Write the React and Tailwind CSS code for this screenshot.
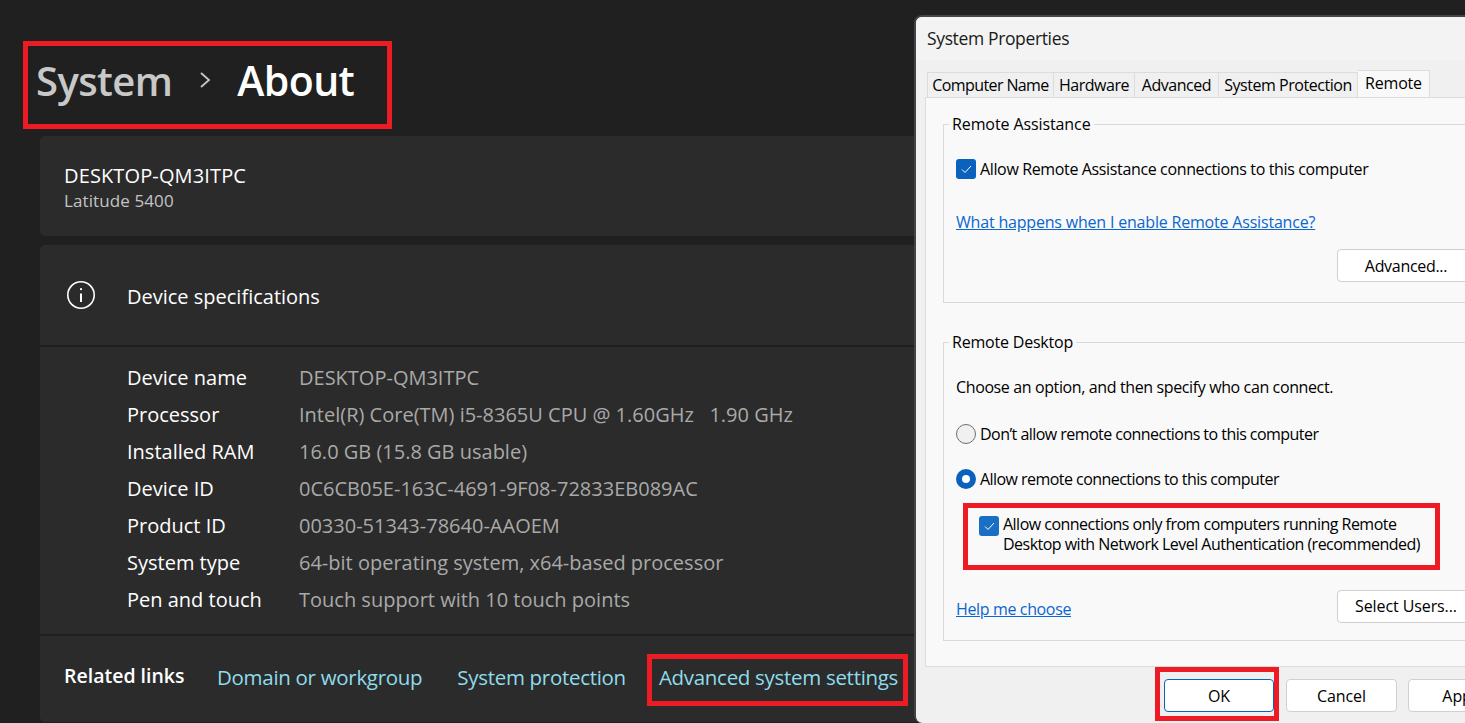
const font = { fontFamily: '"Open Sans", "Noto Sans", sans-serif' };

const specs = [
  ["Device name", "DESKTOP-QM3ITPC"],
  ["Processor", "Intel(R) Core(TM) i5-8365U CPU @ 1.60GHz   1.90 GHz"],
  ["Installed RAM", "16.0 GB (15.8 GB usable)"],
  ["Device ID", "0C6CB05E-163C-4691-9F08-72833EB089AC"],
  ["Product ID", "00330-51343-78640-AAOEM"],
  ["System type", "64-bit operating system, x64-based processor"],
  ["Pen and touch", "Touch support with 10 touch points"],
];

function Check({ color }) {
  return (
    <span className="flex h-5 w-5 shrink-0 items-center justify-center rounded-[3px]" style={{ backgroundColor: color }}>
      <svg width="11" height="9" viewBox="0 0 11 9" fill="none" stroke="#fff" strokeWidth="1">
        <path d="M1 4.5 L4 7.5 L10 1" />
      </svg>
    </span>
  );
}

function Btn({ children, className = "" }) {
  return (
    <div className={`flex h-[33px] shrink-0 items-center justify-center rounded-[4px] border bg-white text-[16px] text-black ${className}`}>
      {children}
    </div>
  );
}

function Redbox({ className }) {
  return <div className={`absolute border-[5px] border-[#ed1c24] ${className}`} />;
}

export default function App() {
  return (
    <div className="relative h-[723px] w-[1465px] overflow-hidden bg-[#202020] text-white" style={font}>
      <div className="flex w-[960px] flex-col pl-[40px]">
        <div className="flex h-[136px] items-center pt-[25px]">
          <span className="ml-[-4px] text-[40px] font-semibold tracking-[-0.6px] text-[#c8c8c8]">System</span>
          <svg className="ml-[27px] mt-[-2px]" width="12" height="18" viewBox="0 0 12 18" fill="none" stroke="#c8c8c8" strokeWidth="1.8">
            <path d="M2 2 L10 9 L2 16" />
          </svg>
          <span className="ml-[26px] text-[41px] font-semibold tracking-[-0.6px] text-white">About</span>
        </div>

        <div className="flex h-[100px] flex-col justify-center rounded-[5px] bg-[#2b2b2b] pl-[24px] pt-[4px]">
          <div className="text-[20px] leading-[26px] tracking-[0.13px] text-white">DESKTOP-QM3ITPC</div>
          <div className="text-[17px] leading-[24px] tracking-[0.1px] text-[#c4c4c4]">Latitude 5400</div>
        </div>

        <div className="mt-[9px] flex h-[477px] flex-col rounded-[5px] bg-[#2b2b2b]">
          <div className="flex h-[102px] items-center border-b-2 border-[#1f1f1f] pl-[26px]">
            <svg width="30" height="30" viewBox="0 0 30 30" fill="none" stroke="#fff" strokeWidth="1.6">
              <circle cx="15" cy="15" r="13.2" />
              <path d="M15 13.5 V22" strokeWidth="2" />
              <circle cx="15" cy="9.2" r="1.1" fill="#fff" stroke="none" />
            </svg>
            <span className="ml-[31px] pt-[4px] text-[20px] text-white">Device specifications</span>
          </div>
          <div className="flex h-[287px] flex-col pl-[87px] pt-[12px]">
            {specs.map(([k, v]) => (
              <div key={k} className="flex h-[37px] items-center text-[20px]">
                <span className="w-[172px] shrink-0 text-white">{k}</span>
                <span className="whitespace-pre text-[#a9a9a9]">{v}</span>
              </div>
            ))}
          </div>
          <div className="flex flex-1 items-center border-t-2 border-[#1f1f1f] pb-[4px] pl-[24px]">
            <span className="w-[153px] pb-[2px] text-[19.5px] font-semibold text-white">Related links</span>
            <span className="text-[20.5px] tracking-[-0.3px] text-[#8fdcec]">Domain or workgroup</span>
            <span className="ml-[35px] text-[20.5px] tracking-[-0.3px] text-[#8fdcec]">System protection</span>
            <span className="ml-[33px] text-[20.5px] tracking-[-0.3px] text-[#8fdcec]">Advanced system settings</span>
          </div>
        </div>
      </div>

      {/* Dialog window */}
      <div className="absolute left-[914px] top-[15px] flex h-[708px] w-[560px] flex-col overflow-hidden rounded-l-[8px] border-l-2 border-t-2 border-[#444] bg-[#f0f0f0] text-black">
        <div className="flex h-[43px] shrink-0 items-center bg-[#f3f3f3] pl-[11px] text-[17.5px] tracking-[-0.36px] text-[#1a1a1a]">System Properties</div>
        <div className="flex h-[37px] shrink-0 items-end whitespace-nowrap bg-[#f0f0f0] pl-[11px] text-[16px] tracking-[-0.45px]">
          <div className="flex h-[25px] w-[127px] items-center justify-center border border-b-0 border-[#dcdcdc] tracking-[-0.6px]">Computer Name</div>
          <div className="flex h-[25px] w-[81px] items-center justify-center border border-b-0 border-l-0 border-[#dcdcdc]">Hardware</div>
          <div className="flex h-[25px] w-[84px] items-center justify-center border border-b-0 border-l-0 border-[#dcdcdc]">Advanced</div>
          <div className="flex h-[25px] w-[139px] items-center justify-center border border-b-0 border-l-0 border-[#dcdcdc]">System Protection</div>
          <div className="flex h-[27px] w-[72px] items-start justify-center border border-b-0 border-l-0 border-[#dcdcdc] bg-[#f9f9f9] tracking-[-0.2px]">Remote</div>
        </div>
        <div className="ml-[9px] flex h-[570px] shrink-0 flex-col border border-[#dcdcdc] bg-[#f9f9f9] pl-[17px] pt-[14px] text-[16px] tracking-[-0.5px]">
          <fieldset className="h-[191px] w-[560px] shrink-0 border border-[#d9d9d9] pl-[12px]">
            <legend className="ml-[-7px] bg-[#f9f9f9] px-[3px] leading-[24px] tracking-[-0.1px]">Remote Assistance</legend>
            <div className="mt-[21px] flex items-center gap-[4px] tracking-[-0.36px]">
              <Check color="#0a62bd" />
              <span>Allow Remote Assistance connections to this computer</span>
            </div>
            <div className="mt-[31px] leading-[20px] tracking-[-0.19px] text-[#0a66d0] underline">What happens when I enable Remote Assistance?</div>
            <Btn className="ml-[381px] mt-[17px] w-[138px] border-[#d0d0d0] tracking-[-0.3px]">Advanced...</Btn>
          </fieldset>
          <fieldset className="mt-[27px] h-[311px] w-[560px] shrink-0 border border-[#d9d9d9] pl-[12px]">
            <legend className="ml-[-7px] bg-[#f9f9f9] px-[3px] leading-[24px] tracking-[-0.2px]">Remote Desktop</legend>
            <div className="mt-[23px] leading-[20px] tracking-[-0.38px]">Choose an option, and then specify who can connect.</div>
            <div className="mt-[25px] flex items-center gap-[4px] tracking-[-0.54px]">
              <span className="h-5 w-5 shrink-0 rounded-full border border-[#6e6e6e] bg-[#f0f0f0]" />
              <span>Don’t allow remote connections to this computer</span>
            </div>
            <div className="mt-[21px] flex items-center gap-[4px] tracking-[-0.55px]">
              <span className="h-5 w-5 shrink-0 rounded-full border-[6px] border-[#0a62bd] bg-white" />
              <span>Allow remote connections to this computer</span>
            </div>
            <div className="ml-[23px] mt-[23px] flex items-start gap-[4px] leading-[20px] tracking-[-0.52px]">
              <span className="mt-[2px]"><Check color="#1a6fc4" /></span>
              <span className="w-[450px]">Allow connections only from computers running Remote Desktop with Network Level Authentication (recommended)</span>
            </div>
            <div className="mt-[36px] flex items-center">
              <span className="w-[381px] pt-[5px] tracking-[-0.36px] text-[#0a66d0] underline">Help me choose</span>
              <Btn className="w-[138px] border-[#d0d0d0] pb-[2px] tracking-[-0.1px]">Select Users...</Btn>
            </div>
          </fieldset>
        </div>
        <div className="flex h-[54px] shrink-0 items-start bg-[#f0f0f0] pl-[248px] pt-[12px] tracking-[-0.1px]">
          <Btn className="w-[110px] border-[#0a62bd]">OK</Btn>
          <Btn className="ml-[12px] w-[111px] border-[#d0d0d0]">Cancel</Btn>
          <Btn className="ml-[11px] w-[110px] border-[#d0d0d0]">Apply</Btn>
        </div>
      </div>

      <Redbox className="left-[23px] top-[41px] h-[88px] w-[369px]" />
      <Redbox className="left-[647px] top-[654px] h-[52px] w-[261px]" />
      <Redbox className="left-[963px] top-[503px] h-[67px] w-[477px]" />
      <Redbox className="left-[1155px] top-[667px] h-[54px] w-[124px]" />
    </div>
  );
}
